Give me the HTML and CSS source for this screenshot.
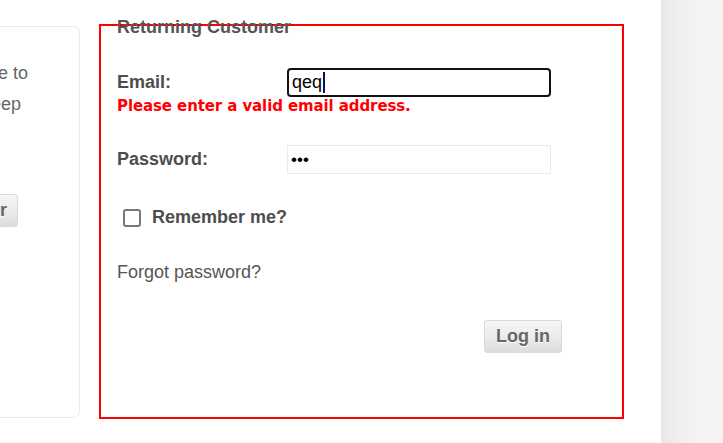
FILE: index.html
```html
<!DOCTYPE html>
<html lang="en">
<head>
<meta charset="utf-8">
<title>Login</title>
<link rel="stylesheet" href="styles.css">
</head>
<body>
<div class="page">
  <main class="content">
    <section class="panel panel--new">
      <p class="intro">
        <span class="intro-line intro-line--1">an account you'll be able to</span>
        <span class="intro-line intro-line--2">check out faster and keep</span>
      </p>
      <div class="new-actions">
        <button type="button" class="btn">Register</button>
      </div>
    </section>

    <section class="panel panel--returning">
      <h2 class="title">Returning Customer</h2>
      <form class="login-form" onsubmit="return false">
        <div class="field field--email">
          <label class="label" for="email">Email:</label>
          <div class="input-wrap">
            <input class="input input--focused" id="email" type="text" value="qeq">
            <span class="caret"></span>
          </div>
        </div>
        <div class="error">Please enter a valid email address.</div>

        <div class="field field--password">
          <label class="label" for="password">Password:</label>
          <input class="input input--password" id="password" type="password" value="abc">
        </div>

        <div class="remember">
          <input class="checkbox" id="remember" type="checkbox">
          <label class="label" for="remember">Remember me?</label>
        </div>

        <a class="forgot" href="#">Forgot password?</a>

        <div class="form-actions">
          <button type="submit" class="btn btn--login">Log in</button>
        </div>
      </form>
    </section>
  </main>
  <aside class="sidebar"></aside>
</div>
</body>
</html>
```

FILE: styles.css
```css
* { box-sizing: border-box; }

html, body {
  margin: 0;
  padding: 0;
  background: #fff;
  font-family: "Liberation Sans", Arial, sans-serif;
}

.page {
  display: flex;
  height: 443px;
  overflow: hidden;
}

.content {
  flex: 0 0 661px;
  display: flex;
  align-items: flex-start;
  gap: 19px;
  padding-top: 26px;
  overflow: hidden;
  background: #fff;
}

.sidebar {
  flex: 1 1 auto;
  background: linear-gradient(to right, #e8e8e8 0%, #efefee 25%, #f3f3f2 60%, #f5f5f4 100%);
}

.panel {
  flex: 0 0 auto;
  background: #fff;
}

/* left, partly visible panel */
.panel--new {
  width: 300px;
  height: 392px;
  margin-left: -220px;
  border: 1px solid #ebebeb;
  border-radius: 6px;
  padding-top: 31px;
  overflow: hidden;
}

.intro {
  margin: 0;
  font-size: 18px;
  line-height: 31px;
  color: #666;
  white-space: nowrap;
}

.intro-line {
  display: block;
  text-align: right;
}
.intro-line--1 { padding-right: 51px; }
.intro-line--2 { padding-right: 58px; }

.new-actions {
  display: flex;
  justify-content: flex-end;
  margin-top: 74px;
  padding-right: 61px;
}

/* returning customer panel */
.panel--returning {
  width: 525px;
  height: 395px;
  margin-top: -2px;
  border: 2px solid #ff0000;
  padding: 0 16px;
}

.title {
  margin: -9px 0 0;
  font-size: 18px;
  line-height: 21px;
  font-weight: bold;
  color: #555;
}

.login-form {
  display: flex;
  flex-direction: column;
  align-items: flex-start;
}

.field {
  display: grid;
  grid-template-columns: 170px 264px;
  align-items: center;
}

.field--email { margin-top: 30px; }
.field--password { margin-top: 30px; }

.label {
  font-size: 18px;
  line-height: 21px;
  font-weight: bold;
  color: #4d4d4d;
}

.input-wrap {
  position: relative;
  width: 264px;
}

.input {
  display: block;
  width: 264px;
  height: 29px;
  margin: 0;
  background: #fff;
  font-family: "Liberation Sans", Arial, sans-serif;
  color: #000;
  outline: none;
}

.input--focused {
  border: 2px solid #111;
  border-radius: 4px;
  padding: 0 3px;
  font-size: 18px;
}

.caret {
  position: absolute;
  left: 36px;
  top: 4px;
  width: 2px;
  height: 21px;
  background: #10104a;
}

.input--password {
  border: 1px solid #ebebeb;
  border-radius: 0;
  padding: 0 3px;
  font-size: 17px;
}

.error {
  font-family: "DejaVu Sans", Verdana, sans-serif;
  font-size: 15px;
  line-height: 18px;
  font-weight: bold;
  color: #ff0000;
  letter-spacing: -0.1px;
}

.remember {
  display: flex;
  align-items: center;
  gap: 11px;
  margin-top: 33px;
  height: 21px;
}

.checkbox {
  appearance: none;
  -webkit-appearance: none;
  width: 18px;
  height: 18px;
  margin: 0 0 0 6px;
  border: 2px solid #777;
  border-radius: 3px;
  background: #fff;
}

.forgot {
  margin-top: 34px;
  font-size: 18px;
  line-height: 21px;
  color: #555;
  text-decoration: none;
}

.form-actions {
  align-self: stretch;
  display: flex;
  justify-content: flex-end;
  margin-top: 37px;
  padding-right: 44px;
}

.btn {
  height: 33px;
  padding: 0 10px;
  border: 1px solid #dadada;
  border-radius: 3px;
  background: linear-gradient(to bottom, #f6f6f6 0%, #ececec 50%, #dcdcdc 100%);
  font-family: "Liberation Sans", Arial, sans-serif;
  font-size: 18px;
  font-weight: bold;
  color: #666;
  text-shadow: 0 1px 0 #fff;
  cursor: pointer;
}

.btn--login {
  width: 78px;
  padding: 0;
}
```
